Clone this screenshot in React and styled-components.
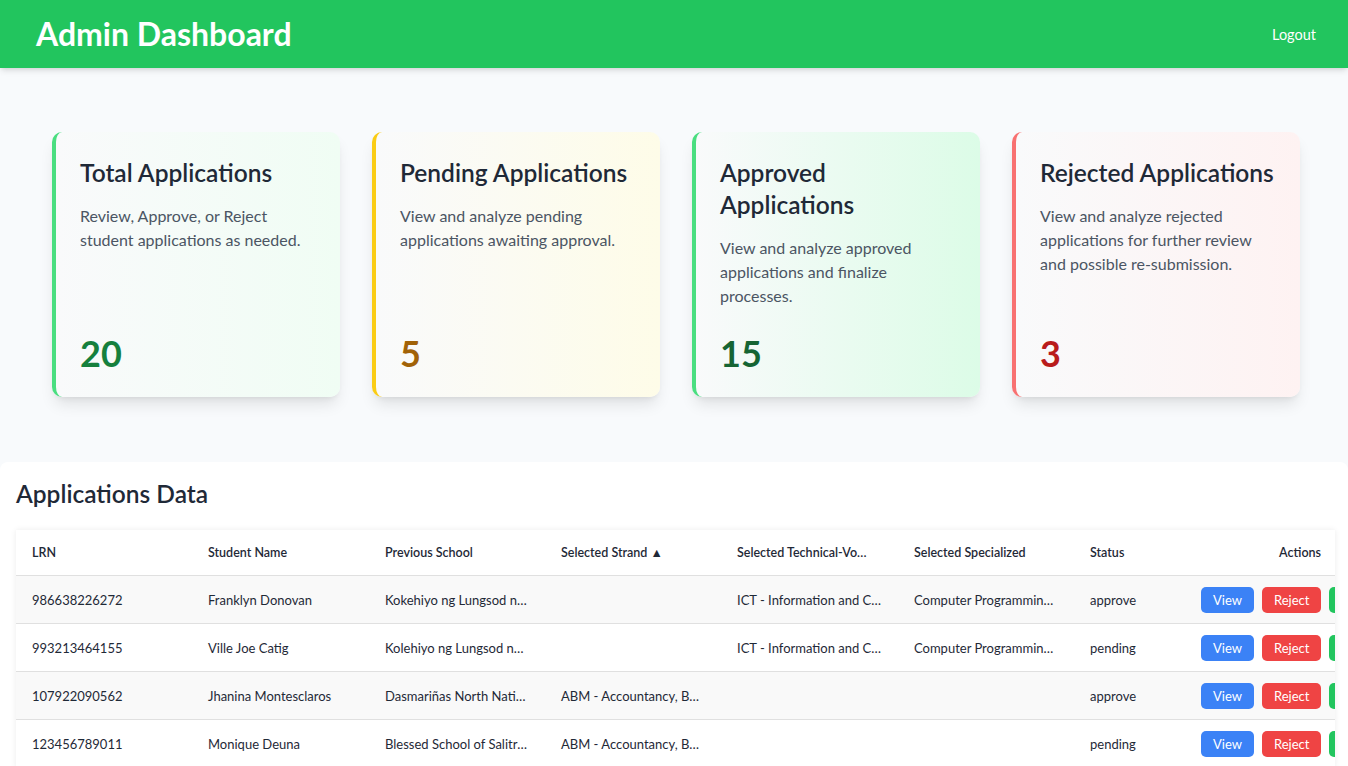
import React from "react";
import styled, { createGlobalStyle } from "styled-components";

const Global = createGlobalStyle`
  html, body { margin: 0; padding: 0; }
  body {
    background: #f8fafc;
    font-family: Lato, "Open Sans", sans-serif;
    color: #1f2937;
    overflow: hidden;
  }
  * { box-sizing: border-box; }
`;

const Page = styled.div`
  min-height: 766px;
  display: flex;
  flex-direction: column;
`;

const Header = styled.header`
  height: 68px;
  background: #22c55e;
  display: flex;
  align-items: center;
  justify-content: space-between;
  padding: 0 32px 0 36px;
  box-shadow: 0 4px 6px -1px rgba(0,0,0,0.1), 0 2px 4px -2px rgba(0,0,0,0.1);
  position: relative;
  z-index: 1;
`;

const Title = styled.h1`
  margin: 0;
  color: #fff;
  font-size: 32px;
  font-weight: 700;
  line-height: 36px;
`;

const LogoutButton = styled.button`
  background: none;
  border: none;
  color: #fff;
  font-family: inherit;
  font-size: 14.5px;
  padding: 0;
  cursor: pointer;
`;

const CardGrid = styled.section`
  display: grid;
  grid-template-columns: repeat(4, 288px);
  gap: 32px;
  padding: 64px 48px 65px 52px;
`;

const Card = styled.div`
  display: flex;
  flex-direction: column;
  height: 265px;
  padding: 24px;
  border-radius: 10px;
  border-left: 4px solid ${p => p.$border};
  background: linear-gradient(to right, #f9fafb, ${p => p.$tint});
  box-shadow: 0 10px 15px -3px rgba(0,0,0,0.1), 0 4px 6px -4px rgba(0,0,0,0.1);
`;

const CardTitle = styled.h2`
  margin: 0;
  padding-top: 1px;
  font-size: 24.5px;
  font-weight: 600;
  line-height: 32px;
  color: #1f2937;
`;

const CardText = styled.p`
  margin: 15px 0 0;
  font-size: 16px;
  line-height: 24px;
  color: #4b5563;
`;

const CardValue = styled.div`
  margin-top: auto;
  font-size: 36px;
  line-height: 40px;
  font-weight: 700;
  color: ${p => p.$color};
`;

const Panel = styled.section`
  flex: 1;
  background: #fff;
  border-radius: 8px 8px 0 0;
  padding: 16px 13px 0 16px;
`;

const PanelTitle = styled.h2`
  margin: 0 0 20px;
  font-size: 24.5px;
  font-weight: 600;
  line-height: 32px;
  color: #1f2937;
`;

const TableWrap = styled.div`
  overflow: hidden;
  box-shadow: 0 0 6px rgba(0,0,0,0.08);
`;

const cols = "176px 177px 176px 176px 177px 176px 111px 152px";

const HeadRow = styled.div`
  display: grid;
  grid-template-columns: ${cols};
  height: 46px;
  align-items: center;
  border-bottom: 1px solid #e0e0e0;
  background: #fff;
`;

const HeadCell = styled.div`
  padding: ${p => (p.$right ? "0 16px" : "0 30px 0 16px")};
  font-size: 12.5px;
  font-weight: 600;
  color: #1f2937;
  white-space: nowrap;
  overflow: hidden;
  text-overflow: ellipsis;
  text-align: ${p => (p.$right ? "right" : "left")};
`;

const Row = styled.div`
  display: grid;
  grid-template-columns: ${cols};
  height: 48px;
  align-items: center;
  border-bottom: 1px solid #e0e0e0;
  background: ${p => (p.$odd ? "#f9f9f9" : "#fff")};
`;

const Cell = styled.div`
  padding: 0 16px;
  font-size: 13px;
  color: #1f2937;
  white-space: nowrap;
  overflow: hidden;
  text-overflow: ellipsis;
`;

const Actions = styled.div`
  padding: 0 16px;
  display: flex;
  gap: 8px;
  white-space: nowrap;
`;

const ActionButton = styled.button`
  flex: none;
  height: 26px;
  padding: 0 12px;
  border: none;
  border-radius: 5px;
  background: ${p => p.$bg};
  color: #fff;
  font-family: inherit;
  font-size: 13px;
  cursor: pointer;
`;

const cards = [
  { title: "Total Applications", text: "Review, Approve, or Reject student applications as needed.", value: 20, border: "#4ade80", tint: "#f0fdf4", color: "#15803d" },
  { title: "Pending Applications", text: "View and analyze pending applications awaiting approval.", value: 5, border: "#facc15", tint: "#fefce8", color: "#a16207" },
  { title: "Approved Applications", text: "View and analyze approved applications and finalize processes.", value: 15, border: "#4ade80", tint: "#dcfce7", color: "#166534" },
  { title: "Rejected Applications", text: "View and analyze rejected applications for further review and possible re-submission.", value: 3, border: "#f87171", tint: "#fef2f2", color: "#b91c1c" },
];

const headers = ["LRN", "Student Name", "Previous School", "Selected Strand ▲", "Selected Technical-Vocational", "Selected Specialized", "Status"];

const rows = [
  ["986638226272", "Franklyn Donovan", "Kokehiyo ng Lungsod ng Dasmariñas", "", "ICT - Information and Communications Technology", "Computer Programming (Java)", "approve"],
  ["993213464155", "Ville Joe Catig", "Kolehiyo ng Lungsod ng Dasmariñas", "", "ICT - Information and Communications Technology", "Computer Programming (Java)", "pending"],
  ["107922090562", "Jhanina Montesclaros", "Dasmariñas North National High School", "ABM - Accountancy, Business and Management", "", "", "approve"],
  ["123456789011", "Monique Deuna", "Blessed School of Salitran", "ABM - Accountancy, Business and Management", "", "", "pending"],
];

export default function App() {
  return (
    <Page>
      <Global />
      <Header>
        <Title>Admin Dashboard</Title>
        <LogoutButton>Logout</LogoutButton>
      </Header>
      <CardGrid>
        {cards.map(c => (
          <Card key={c.title} $border={c.border} $tint={c.tint}>
            <CardTitle>{c.title}</CardTitle>
            <CardText>{c.text}</CardText>
            <CardValue $color={c.color}>{c.value}</CardValue>
          </Card>
        ))}
      </CardGrid>
      <Panel>
        <PanelTitle>Applications Data</PanelTitle>
        <TableWrap>
          <HeadRow>
            {headers.map(h => <HeadCell key={h}>{h}</HeadCell>)}
            <HeadCell $right>Actions</HeadCell>
          </HeadRow>
          {rows.map((r, i) => (
            <Row key={r[0]} $odd={i % 2 === 0}>
              {r.map((v, j) => <Cell key={j}>{v}</Cell>)}
              <Actions>
                <ActionButton $bg="#3b82f6">View</ActionButton>
                <ActionButton $bg="#ef4444">Reject</ActionButton>
                <ActionButton $bg="#22c55e">Approve</ActionButton>
              </Actions>
            </Row>
          ))}
        </TableWrap>
      </Panel>
    </Page>
  );
}
